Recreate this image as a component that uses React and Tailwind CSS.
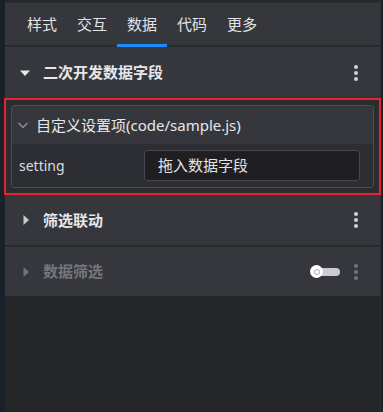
import { useState } from "react";

const font = { fontFamily: '"Noto Sans", "Noto Sans CJK SC", sans-serif' };

function Dots({ dim }) {
  return (
    <div className={"flex flex-col items-center gap-[2px] " + (dim ? "opacity-40" : "")}>
      <span className="w-[4px] h-[4px] rounded-full bg-[#d0d1d6]" />
      <span className="w-[4px] h-[4px] rounded-full bg-[#d0d1d6]" />
      <span className="w-[4px] h-[4px] rounded-full bg-[#d0d1d6]" />
    </div>
  );
}

function Caret({ open, dim }) {
  return (
    <svg width="10" height="10" viewBox="0 0 10 10" className={dim ? "opacity-40" : ""}>
      {open ? (
        <path d="M0 2.5 L10 2.5 L5 8 Z" fill="#e6e7ea" />
      ) : (
        <path d="M2.5 0 L8 5 L2.5 10 Z" fill="#c8c9cd" />
      )}
    </svg>
  );
}

export default function App() {
  const [tab, setTab] = useState("数据");
  const tabs = ["样式", "交互", "数据", "代码", "更多"];

  return (
    <div className="flex w-[383px] h-[412px] bg-[#1b2129] overflow-hidden" style={font}>
      <div className="w-[5px] shrink-0" />
      <div className="flex flex-col w-[376px] shrink-0 bg-[#252628] border-r border-[#2e2f33]">
        <div className="h-[3px] bg-[#27282b] border-b border-[#2b2c30]" />
        <div className="flex items-end h-[44px] bg-[#36373d] px-[12px] border-b-2 border-[#2a2b2f]">
          {tabs.map((t) => (
            <button
              key={t}
              onClick={() => setTab(t)}
              className={
                "w-[50px] h-[42px] flex items-center justify-center text-[15px] text-[#e2e3e6] border-b-[3px] mb-[-2px] " +
                (tab === t ? "border-[#1a8cff]" : "border-transparent")
              }
            >
              {t}
            </button>
          ))}
        </div>

        <div className="flex items-center h-[51px] bg-[#36373d] pl-[15px] pr-[22px]">
          <Caret open />
          <span className="ml-[13px] text-[15px] font-bold text-[#e6e7ea]">二次开发数据字段</span>
          <div className="ml-auto"><Dots /></div>
        </div>

        <div className="border-2 border-[#e8232b] bg-[#2b2c30] mx-[-1px] p-[5px]">
          <div className="border border-[#4b4c53] rounded-[3px] overflow-hidden">
            <div className="flex items-center h-[38px] bg-[#36373d] pl-[5px]">
              <svg width="12" height="12" viewBox="0 0 12 12">
                <path d="M1.5 4 L6 8.5 L10.5 4" fill="none" stroke="#9a9ba0" strokeWidth="1.1" />
              </svg>
              <span className="ml-[7px] text-[15px] text-[#e6e7ea]">自定义设置项(code/sample.js)</span>
            </div>
            <div className="flex items-center h-[43px] bg-[#2d2e33] pl-[7px] pr-[13px]">
              <span className="w-[125px] text-[14px] text-[#dcdde0]">setting</span>
              <div className="flex-1 h-[31px] flex items-center bg-[#1f1f21] border border-[#46474d] rounded-[3px] pl-[13px] text-[15px] text-[#e2e3e6]">
                拖入数据字段
              </div>
            </div>
          </div>
        </div>

        <div className="flex items-center h-[52px] bg-[#36373d] pl-[16px] pr-[22px] border-b-2 border-[#2a2b2f]">
          <Caret />
          <span className="ml-[12px] text-[15px] font-bold text-[#e6e7ea]">筛选联动</span>
          <div className="ml-auto"><Dots /></div>
        </div>

        <div className="flex items-center h-[49px] bg-[#36373d] pl-[16px] pr-[22px]">
          <Caret dim />
          <span className="ml-[12px] text-[15px] font-bold text-[#75767b]">数据筛选</span>
          <div className="ml-auto flex items-center gap-[14px]">
            <div className="relative w-[30px] h-[13px] flex items-center">
              <div className="absolute left-[6px] right-0 h-[8px] rounded-full bg-[#c9cad2]" />
              <div className="absolute left-0 w-[13px] h-[13px] rounded-full bg-white flex items-center justify-center">
                <span className="w-[6px] h-[6px] rounded-full border border-[#b0b1b8]" />
              </div>
            </div>
            <Dots dim />
          </div>
        </div>

        <div className="flex-1 bg-[#252628]" />
      </div>
    </div>
  );
}
